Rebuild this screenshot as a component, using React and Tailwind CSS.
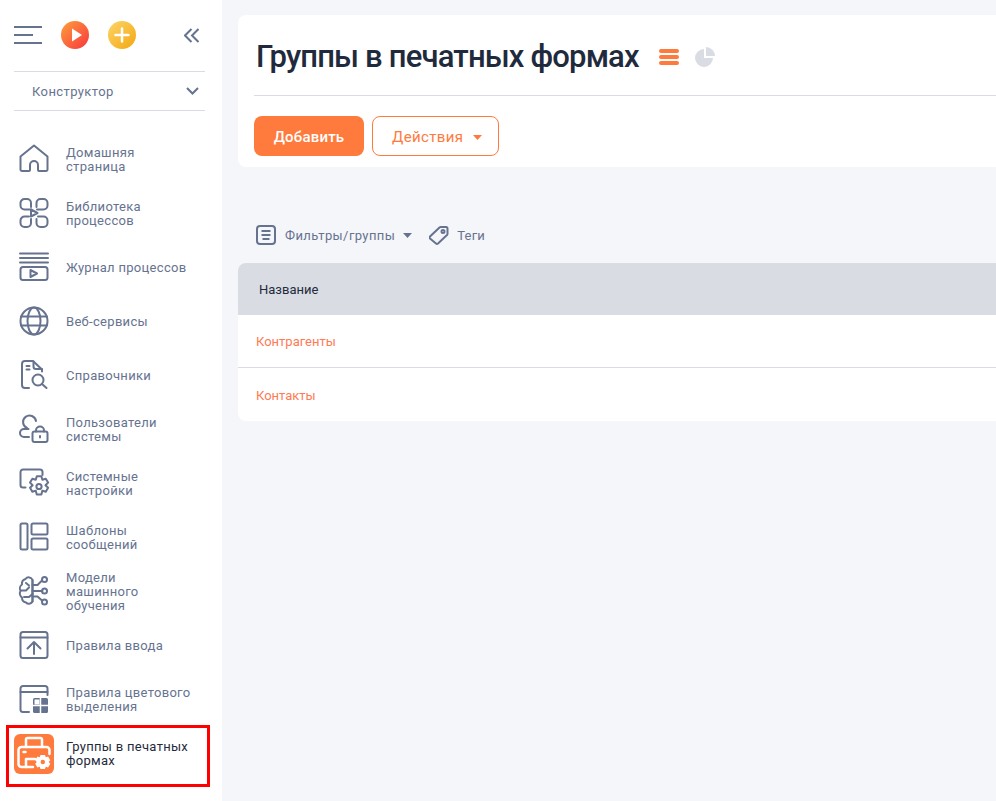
import React from "react";

const Svg = ({ children, size = 32 }) => (
  <svg
    width={size}
    height={size}
    viewBox="0 0 32 32"
    fill="none"
    stroke="#66738f"
    strokeWidth="2"
    strokeLinecap="round"
    strokeLinejoin="round"
  >
    {children}
  </svg>
);

const HomeIcon = () => (
  <Svg>
    <path d="M4 28h7a1 1 0 0 0 1-1v-5a4 4 0 0 1 8 0v5a1 1 0 0 0 1 1h7a1.500 1.500 0 0 0 1.500-1.500V13.500L16 2.500 2.500 13.500v13A1.500 1.500 0 0 0 4 28z" />
  </Svg>
);

const LibraryIcon = () => (
  <Svg>
    <path d="M13 10V6a4 4 0 0 0-4-4H6.500a4 4 0 0 0-4 4v2.500a4 4 0 0 0 4 4H13" />
    <path d="M18.500 10V6a4 4 0 0 1 4-4H25.500a4 4 0 0 1 4 4v2.500a4 4 0 0 1-4 4H19" />
    <path d="M13 22v4a4 4 0 0 1-4 4H6.500a4 4 0 0 1-4-4v-2.500a4 4 0 0 1 4-4H11" />
    <path d="M18.500 22v4a4 4 0 0 0 4 4H25.500a4 4 0 0 0 4-4v-2.500a4 4 0 0 0-4-4H20" />
    <path d="M13 12.500l6.500 3.500-6.500 3.500z" />
  </Svg>
);

const JournalIcon = () => (
  <Svg>
    <path d="M2 2.500h28M2 7h28M2 11.500h28" />
    <rect x="2.500" y="16" width="27" height="13" rx="2.500" />
    <path d="M12.500 19l6.500 3.500-6.500 3.500z" />
  </Svg>
);

const GlobeIcon = () => (
  <Svg>
    <circle cx="16" cy="16" r="13.500" />
    <ellipse cx="16" cy="16" rx="6.500" ry="13.500" />
    <path d="M3 11.500h26M3 20.500h26" />
  </Svg>
);

const DirectoryIcon = () => (
  <Svg>
    <path d="M11 29H7a3 3 0 0 1-3-3V5a3 3 0 0 1 3-3h8l9 8.500v2" />
    <path d="M15.500 2.500v5a2.500 2.500 0 0 0 2.500 2.500h6" />
    <path d="M8.500 7h3M8.500 10.500h3" />
    <circle cx="20" cy="21" r="5.500" />
    <path d="M24 25l4.500 4" />
  </Svg>
);

const UserLockIcon = () => (
  <Svg>
    <path d="M9 15a6.500 6.500 0 1 1 9-7" />
    <path d="M10.500 16H6a4 4 0 0 0 0 8h5" />
    <rect x="14.500" y="18.500" width="15" height="10.500" rx="2" />
    <path d="M18 18.500v-1a4 4 0 0 1 8 0v1" />
    <path d="M22 23v1.500" />
  </Svg>
);

const SettingsIcon = () => (
  <Svg>
    <path d="M7.500 20.500H5A2.500 2.500 0 0 1 2.500 18V5A2.500 2.500 0 0 1 5 2.500h17A2.500 2.500 0 0 1 24.500 5v3" />
    <g transform="translate(21 19.500) scale(1.300) translate(-21.700 -19.400)" strokeWidth="1.550">
      <path d="M20 11.500h3.500l.8 2.700 2.600-.8 1.800 3-2 2 2 2-1.800 3-2.600-.8-.8 2.900H20l-.8-2.900-2.600.8-1.800-3 2-2-2-2 1.800-3 2.600.8z" />
      <circle cx="21.700" cy="19.400" r="2" />
    </g>
  </Svg>
);

const TemplatesIcon = () => (
  <Svg>
    <rect x="2.500" y="2.500" width="7" height="26" rx="1.500" />
    <rect x="13.500" y="2.500" width="16" height="11" rx="1.500" />
    <rect x="13.500" y="17.500" width="16" height="11" rx="1.500" />
  </Svg>
);

const BrainIcon = () => (
  <Svg>
    <path d="M14.500 5a4 4 0 0 0-7-1A5 5 0 0 0 4 9.500a5 5 0 0 0-1.500 6.500A5 5 0 0 0 4 22.500 5 5 0 0 0 8 27.500a4 4 0 0 0 6.500-1z" />
    <path d="M14.500 5v21.500" />
    <path d="M3 15.500h5l3-3M8 8l3 2.500M6 22h5l3.500-3" />
    <path d="M14.500 10h5l4.500-4.500M14.500 16h10M14.500 21.500h5l4.500 4" />
    <circle cx="26.500" cy="4.500" r="2.500" />
    <circle cx="26.500" cy="16" r="2.500" />
    <circle cx="26.500" cy="27" r="2.500" />
  </Svg>
);

const InputRuleIcon = () => (
  <Svg>
    <rect x="2.500" y="3" width="27" height="26" rx="2.500" />
    <path d="M2.500 8.500h27" />
    <path d="M16 25V13.500M9.500 19.500L16 13l6.500 6.500" />
  </Svg>
);

const ColorRuleIcon = () => (
  <Svg>
    <path d="M11 29H5a2.500 2.500 0 0 1-2.500-2.500V5.500A2.500 2.500 0 0 1 5 3h22a2.500 2.500 0 0 1 2.500 2.500V12" />
    <path d="M2.500 9h27" />
    <rect x="15" y="15" width="15" height="15" rx="1.500" fill="#66738f" stroke="none" />
    <path d="M22.500 15v15M15 22.500h15" stroke="#fff" strokeWidth="1.500" strokeLinecap="butt" />
    <rect x="16.500" y="16.500" width="5" height="5" fill="#fff" stroke="none" />
  </Svg>
);

const PrinterIcon = () => (
  <svg
    width="40"
    height="40"
    viewBox="0 0 40 40"
    fill="none"
    stroke="#fff"
    strokeWidth="2.500"
    strokeLinecap="round"
    strokeLinejoin="round"
  >
    <path d="M12 13V5.500A1.500 1.500 0 0 1 13.500 4h13A1.500 1.500 0 0 1 28 5.500V13" />
    <path d="M12 33H7.500a3 3 0 0 1-3-3V16a3 3 0 0 1 3-3h25a3 3 0 0 1 3 3v4" />
    <path d="M9.500 18h2M12 25h9M12 25v8h7" />
    <path
      d="M26.500 21h4.500l.8 2.200 2.300-.6 2.200 3.600-1.600 1.800 1.600 1.800-2.200 3.600-2.300-.6-.8 2.200h-4.500l-.8-2.200-2.300.6-2.200-3.600 1.600-1.800-1.600-1.800 2.200-3.600 2.300.6z"
      fill="#fff"
      stroke="none"
    />
    <circle cx="28.800" cy="28" r="2.200" fill="#ff7a3d" stroke="none" />
  </svg>
);

const navItems = [
  { label: ["Домашняя", "страница"], icon: <HomeIcon /> },
  { label: ["Библиотека", "процессов"], icon: <LibraryIcon /> },
  { label: ["Журнал процессов"], icon: <JournalIcon /> },
  { label: ["Веб-сервисы"], icon: <GlobeIcon /> },
  { label: ["Справочники"], icon: <DirectoryIcon /> },
  { label: ["Пользователи", "системы"], icon: <UserLockIcon /> },
  { label: ["Системные", "настройки"], icon: <SettingsIcon /> },
  { label: ["Шаблоны", "сообщений"], icon: <TemplatesIcon /> },
  { label: ["Модели", "машинного", "обучения"], icon: <BrainIcon /> },
  { label: ["Правила ввода"], icon: <InputRuleIcon /> },
  { label: ["Правила цветового", "выделения"], icon: <ColorRuleIcon /> },
];

const Sidebar = () => (
  <aside className="w-[222px] shrink-0 bg-white">
    {/* Top toolbar */}
    <div className="flex items-center h-[71px] pb-[1px] pl-[14px] pr-[23px]">
      <svg width="28" height="18" viewBox="0 0 28 18" stroke="#66738f" strokeWidth="2">
        <path d="M0 1h28M0 9h19M0 17h28" />
      </svg>
      <svg width="28" height="28" viewBox="0 0 28 28" className="ml-[19px]">
        <defs>
          <linearGradient id="playGrad" x1="0" y1="0" x2="1" y2="1">
            <stop offset="0" stopColor="#fda03a" />
            <stop offset="1" stopColor="#f9353f" />
          </linearGradient>
        </defs>
        <circle cx="14" cy="14" r="14" fill="url(#playGrad)" />
        <path d="M11 7.500l10 6.500-10 6.500z" fill="#fff" />
      </svg>
      <svg width="28" height="28" viewBox="0 0 28 28" className="ml-[19px]">
        <defs>
          <linearGradient id="plusGrad" x1="0" y1="0" x2="1" y2="1">
            <stop offset="0" stopColor="#fdd56a" />
            <stop offset="1" stopColor="#f3a70f" />
          </linearGradient>
        </defs>
        <circle cx="14" cy="14" r="14" fill="url(#plusGrad)" />
        <path d="M14 7.500v13M7.500 14h13" stroke="#fff" strokeWidth="2.500" strokeLinecap="round" />
      </svg>
      <svg
        width="15"
        height="15"
        viewBox="0 0 15 15"
        fill="none"
        stroke="#66738f"
        strokeWidth="2"
        className="ml-auto"
      >
        <path d="M7.500 1L1 7.500 7.500 14M14.500 1L8 7.500l6.500 6.500" />
      </svg>
    </div>

    {/* Section select */}
    <div className="mx-[14px] w-[191px] h-[40px] border-y border-[#d9dce3] flex items-center justify-between pl-[18px] pr-[6px]">
      <span className="pt-[2px] text-[13px] tracking-[0.4px] text-[#66738f]">Конструктор</span>
      <svg width="13" height="8" viewBox="0 0 13 8" fill="none" stroke="#66738f" strokeWidth="2">
        <path d="M1 1l5.500 5.500L12 1" />
      </svg>
    </div>

    {/* Menu */}
    <nav className="mt-[21px] flex flex-col">
      {navItems.map((item) => (
        <a key={item.label[0]} className="flex items-center h-[54px] pl-[18px]">
          <span className="w-[32px] h-[32px] shrink-0">{item.icon}</span>
          <span className="ml-[16px] pt-[2px] text-[13px] leading-[14px] tracking-[0.3px] text-[#66738f]">
            {item.label.map((line) => (
              <span key={line} className="block">
                {line}
              </span>
            ))}
          </span>
        </a>
      ))}
      <a className="flex items-center h-[62px] -mt-[1px] ml-[6px] w-[204px] border-[3px] border-[#ff0000] pl-[5px] pb-[4px]">
        <span className="w-[40px] h-[40px] shrink-0 rounded-md bg-[#ff7a3d]">
          <PrinterIcon />
        </span>
        <span className="ml-[12px] text-[13px] leading-[14px] tracking-[0.3px] text-[#1f2b3d]">
          <span className="block">Группы в печатных</span>
          <span className="block">формах</span>
        </span>
      </a>
    </nav>
  </aside>
);

const Caret = ({ color }) => (
  <svg width="9" height="5" viewBox="0 0 9 5" fill={color}>
    <path d="M0 0h9L4.500 5z" />
  </svg>
);

const Content = () => (
  <main className="flex-1 min-w-0 pl-4 pt-[15px]">
    {/* Header card */}
    <div className="bg-white rounded-l-lg h-[152px] pl-4">
      <div className="flex items-center h-[81px] pt-[3px] border-b border-[#d9dce3]">
        <h1 className="ml-[2px] text-[31px] leading-[36px] font-medium tracking-[-0.82px] text-[#1f2b3d]">
          Группы в печатных формах
        </h1>
        <svg width="20" height="16" viewBox="0 0 20 16" fill="#ff7a3d" className="ml-[20px]">
          <rect y="0" width="20" height="4" rx="2" />
          <rect y="6" width="20" height="4" rx="2" />
          <rect y="12" width="20" height="4" rx="2" />
        </svg>
        <svg width="20" height="20" viewBox="0 0 20 20" fill="#d9dce3" className="ml-[16px]">
          <path d="M9 2a9 9 0 1 0 9 9H9z" />
          <path d="M11 0a9 9 0 0 1 9 9h-9z" />
        </svg>
      </div>
      <div className="flex items-center gap-2 mt-5">
        <button className="w-[110px] h-[40px] pt-[2px] rounded-lg bg-[#ff7a3d] text-white text-[15px] font-medium tracking-[0.2px]">
          Добавить
        </button>
        <button className="w-[127px] h-[40px] pt-[2px] pl-[19px] rounded-lg border border-[#ff7a3d] bg-white text-[#ff7a3d] text-[15px] tracking-[0.35px] flex items-center gap-[10px]">
          Действия
          <Caret color="#ff7a3d" />
        </button>
      </div>
    </div>

    {/* Filters */}
    <div className="flex items-center mt-[52px] h-[32px] pl-[18px]">
      <svg width="20" height="20" viewBox="0 0 20 20" fill="none" stroke="#66738f" strokeWidth="2">
        <rect x="1" y="1" width="18" height="18" rx="3" />
        <path d="M5.500 6h9M5.500 10h9M6.500 14h7" />
      </svg>
      <span className="ml-[9px] pt-[2px] text-[13px] tracking-[0.4px] text-[#66738f]">Фильтры/группы</span>
      <span className="ml-[8px]">
        <Caret color="#66738f" />
      </span>
      <svg
        width="20"
        height="20"
        viewBox="0 0 20 20"
        fill="none"
        stroke="#66738f"
        strokeWidth="2"
        strokeLinejoin="round"
        className="ml-[17px]"
      >
        <path d="M1 11.500L10.500 2.500a2 2 0 0 1 1.500-.5h5a1.500 1.500 0 0 1 1.500 1.500v5a2 2 0 0 1-.5 1.500L9 18.500a1.500 1.500 0 0 1-2 0L1 13.500a1.500 1.500 0 0 1 0-2z" />
        <circle cx="14" cy="6.500" r="1.500" />
      </svg>
      <span className="ml-[8px] pt-[2px] text-[13px] tracking-[0.2px] text-[#66738f]">Теги</span>
    </div>

    {/* Table */}
    <div className="mt-[12px] rounded-l-lg overflow-hidden">
      <div className="h-[52px] pt-[2px] bg-[#d9dce3] flex items-center pl-[21px] text-[13px] text-[#1f2b3d]">
        Название
      </div>
      <div className="h-[53px] pt-[2px] bg-white border-b border-[#d9dce3] flex items-center pl-[18px] text-[13px] text-[#ff7a55]">
        Контрагенты
      </div>
      <div className="h-[53px] pt-[2px] bg-white flex items-center pl-[18px] text-[13px] text-[#ff7a55]">
        Контакты
      </div>
    </div>
  </main>
);

export default function App() {
  return (
    <div className="flex w-full min-h-[801px] overflow-hidden bg-[#f5f6fa] font-['Roboto',sans-serif]">
      <Sidebar />
      <Content />
    </div>
  );
}
